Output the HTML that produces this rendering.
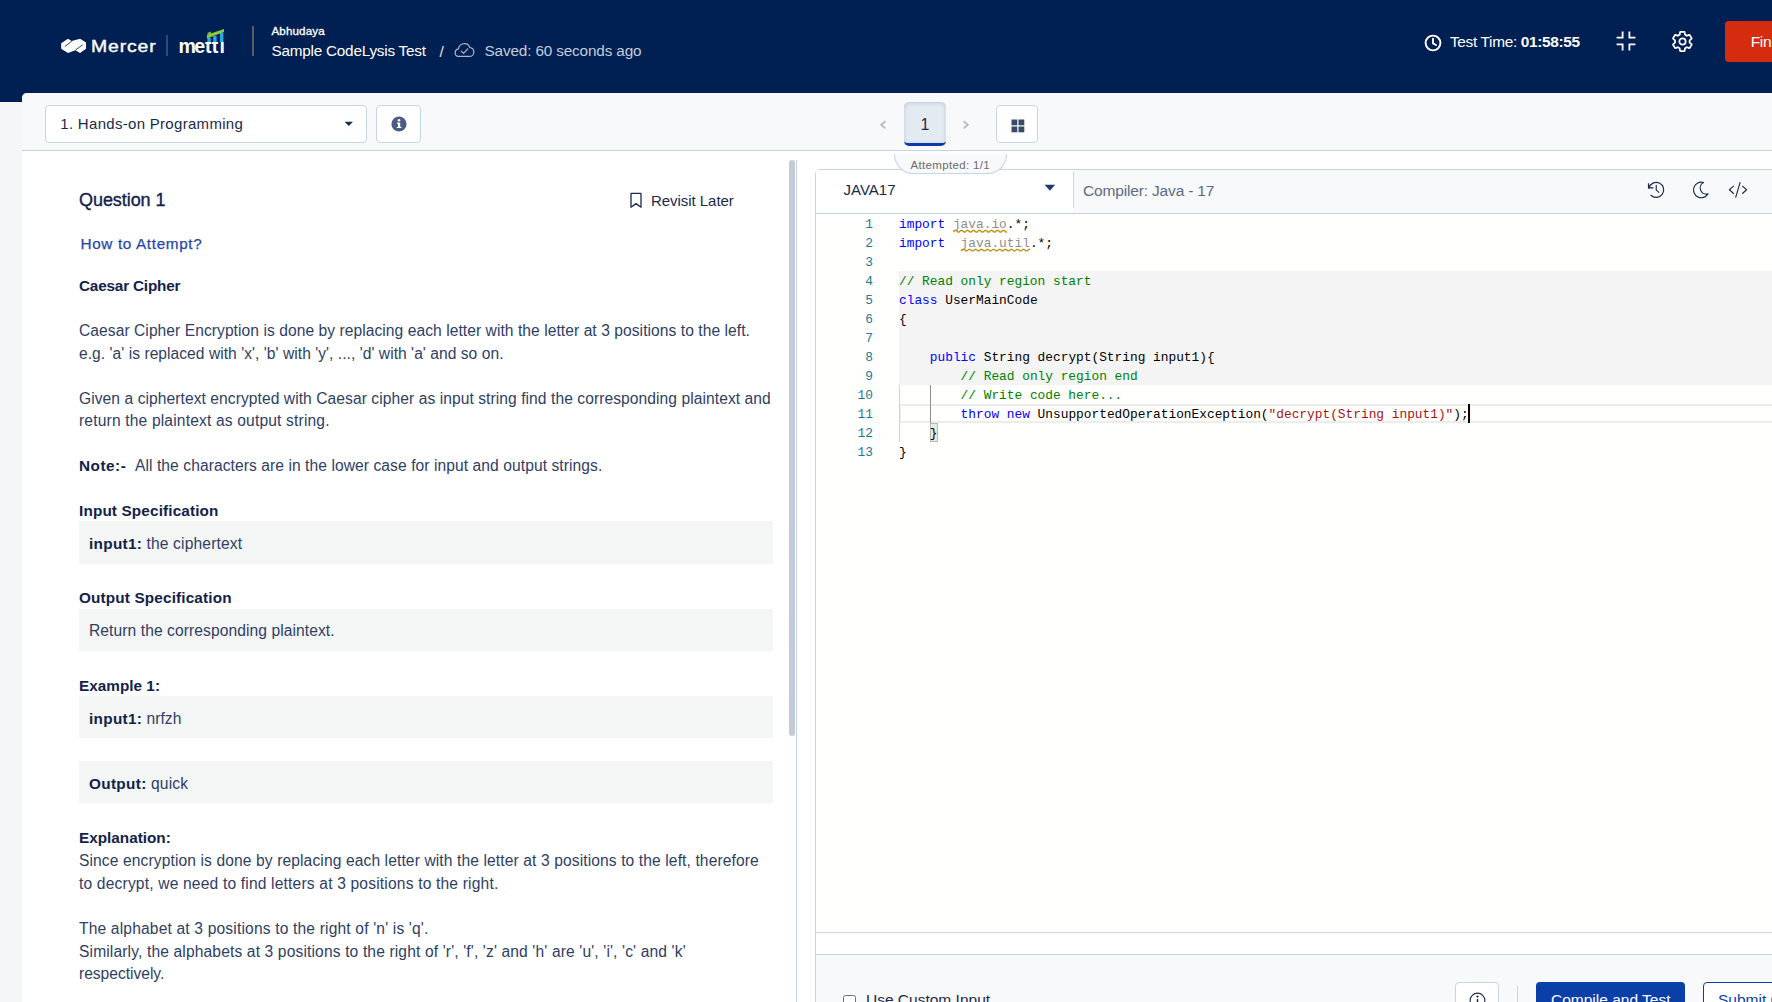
<!DOCTYPE html>
<html lang="en">
<head>
<meta charset="utf-8">
<title>Sample CodeLysis Test</title>
<style>
*{box-sizing:border-box;margin:0;padding:0}
html,body{width:1772px;height:1002px;overflow:hidden}
body{position:relative;background:#f4f6f8;font-family:"Liberation Sans",sans-serif;color:#1b2a4a;font-size:15px}
.abs{position:absolute}
.nw{white-space:nowrap}
/* header */
#hdr{left:0;top:0;width:1772px;height:102px;background:#001f52}
#hdr .t{position:absolute;color:#fff;white-space:nowrap;line-height:1}
/* main panel */
#panel{left:22px;top:93px;width:1760px;height:920px;background:#fff;border-top-left-radius:5px;overflow:hidden}
#tbar{left:0;top:0;width:1760px;height:58px;background:#f8f9fb;border-bottom:1px solid #c4d5e8}
.box{position:absolute;background:#fff;border:1px solid #c4d5e8;border-radius:4px}
/* question */
#q .l{position:absolute;margin-top:1.3px;left:79px;white-space:nowrap;line-height:22px;height:22px;color:#2f4064;font-size:15.6px}
#q .l b{font-size:15.3px}
#q b{color:#12224a}
#q .gb{position:absolute;left:79px;width:694px;background:#f4f5f5}
/* editor */
#code{font-family:"Liberation Mono",monospace;font-size:12.83px;color:#000}
#code .ln{position:absolute;left:0;height:19px;line-height:21.2px;white-space:pre}
#code .n{position:absolute;left:816px;width:57px;text-align:right;height:19px;line-height:21.2px;color:#237893;white-space:pre}
.k{color:#0000ff}.c{color:#008000}.s{color:#a31515}.g{color:#8e8e8e}
</style>
</head>
<body>
<div id="hdr" class="abs">
  <!-- Mercer mark -->
  <svg class="abs" style="left:60px;top:38px" width="27" height="16" viewBox="68.2 136.3 460 272.6">
    <path d="M88 225 L205 148 L268 186 L410 148 L512 215 L512 318 L410 392 L330 347 L205 392 L88 318 Z" fill="#fff"/>
    <path d="M270 190 L150 282 M332 342 L455 250" stroke="#001f52" stroke-width="14" fill="none"/>
  </svg>
  <div class="t" id="h_mercer" style="left:91.4px;top:38.4px;font-size:17.2px;letter-spacing:0.75px;-webkit-text-stroke:0.4px #fff;transform:scaleX(1.13);transform-origin:0 0">Mercer</div>
  <div class="abs" style="left:166px;top:35px;width:2px;height:21px;background:#34477a"></div>
  <div class="t" id="h_mettl" style="left:178.4px;top:36.7px;font-size:19.6px;font-weight:bold;letter-spacing:0px"><span style="letter-spacing:-1.7px">m</span>e<span style="letter-spacing:0.3px">t</span><span style="letter-spacing:1.1px">t</span>l</div>
  <!-- mettl bars -->
  <svg class="abs" style="left:200px;top:26px" width="30" height="16" viewBox="200 26 30 16">
    <rect x="205" y="30" width="22" height="12" fill="#001f52"/>
    <rect x="207.4" y="37.6" width="3.3" height="4.4" fill="#29abe2"/>
    <rect x="213.2" y="35.8" width="3.4" height="6.2" fill="#29abe2"/>
    <rect x="219.9" y="32.6" width="3.5" height="9.4" fill="#29abe2"/>
    <path d="M206.9 34.8 L224 29 L224 32.1 L206.9 38.4 Z M206.9 33.2 L210.8 31.6 L210.8 35 Z" fill="#8dc63f"/>
  </svg>
  <div class="abs" style="left:252px;top:26px;width:2px;height:30px;background:#585c63"></div>
  <div class="t" id="h_name" style="left:271.5px;top:25px;font-size:11.6px;-webkit-text-stroke:0.3px #fff;letter-spacing:0.135px">Abhudaya</div>
  <div class="t" id="h_test" style="left:271.5px;top:43.2px;font-size:15.3px;letter-spacing:-0.229px">Sample CodeLysis Test</div>
  <div class="t" id="h_slash" style="left:439.5px;top:43.5px;font-size:15.5px;color:#dfe4ee">/</div>
  <svg class="abs" style="left:454.3px;top:41.8px" width="21" height="16.2" viewBox="0 0 22 17" fill="none" stroke="#a9b4c9" stroke-width="1.3" stroke-linecap="round" stroke-linejoin="round">
    <path d="M5.6 15.2 C3 15.2 1.2 13.4 1.2 11.2 C1.2 9.2 2.6 7.6 4.6 7.2 C5 4.2 7.6 1.8 10.8 1.8 C13.6 1.8 15.8 3.4 16.6 5.8 C19 6 20.8 8 20.8 10.4 C20.8 13 18.8 15.2 16.2 15.2 Z"/>
    <path d="M7.6 9.6 L10 12 L14.4 7.2"/>
  </svg>
  <div class="t" id="h_saved" style="left:484.5px;top:43.2px;font-size:15.3px;color:#c3ccdc;letter-spacing:-0.142px">Saved: 60 seconds ago</div>
  <!-- right side -->
  <svg class="abs" style="left:1424.4px;top:33.6px" width="18" height="18" viewBox="0 0 18 18" fill="none" stroke="#fff" stroke-width="1.9" stroke-linecap="round" stroke-linejoin="round">
    <circle cx="9" cy="9" r="7.4"/><path d="M9 4.8 V9.4 L12 11"/>
  </svg>
  <div class="t" id="h_tt" style="left:1450px;top:34.2px;font-size:15.4px;letter-spacing:-0.327px">Test Time: <b>01:58:55</b></div>
  <svg class="abs" style="left:1615px;top:30.2px" width="22" height="22" viewBox="0 0 22 22" fill="none" stroke="#fff" stroke-width="1.8">
    <path d="M7.6 1.6 V7.6 H1.6 M14.4 1.6 V7.6 H20.4 M7.6 20.4 V14.4 H1.6 M14.4 20.4 V14.4 H20.4"/>
  </svg>
  <svg class="abs" style="left:1671px;top:29.8px" width="23" height="23" viewBox="0 0 24 24" fill="none" stroke="#fff" stroke-width="1.8" stroke-linejoin="round">
    <circle cx="12" cy="12" r="3.3"/>
    <path d="M19.4 13.2 c.05-.4.08-.8.08-1.2s-.03-.8-.08-1.2l2-1.55a.5.5 0 0 0 .12-.62l-1.9-3.3a.5.5 0 0 0-.6-.22l-2.36.95a7.3 7.3 0 0 0-2.06-1.2l-.36-2.5a.5.5 0 0 0-.5-.42h-3.8a.5.5 0 0 0-.5.42l-.36 2.5c-.75.3-1.44.7-2.06 1.2l-2.36-.95a.5.5 0 0 0-.6.22l-1.9 3.3a.5.5 0 0 0 .12.62l2 1.55c-.05.4-.08.8-.08 1.2s.03.8.08 1.2l-2 1.55a.5.5 0 0 0-.12.62l1.9 3.3c.12.22.38.3.6.22l2.36-.95c.62.5 1.3.9 2.06 1.2l.36 2.5c.04.24.25.42.5.42h3.8c.25 0 .46-.18.5-.42l.36-2.5c.75-.3 1.44-.7 2.06-1.2l2.36.95c.22.08.48 0 .6-.22l1.9-3.3a.5.5 0 0 0-.12-.62z"/>
  </svg>
  <div class="abs" style="left:1725px;top:21px;width:80px;height:41px;background:#d52b0e;border-radius:4px"></div>
  <div class="t" id="h_fin" style="left:1750.8px;top:34px;font-size:15.5px;letter-spacing:-0.4px">Finish Test</div>
</div>
<div id="panel" class="abs">
  <div id="tbar" class="abs"></div>
  <!-- toolbar items (coords relative to panel: x-22, y-93) -->
  <div class="box" style="left:23px;top:12px;width:322px;height:38px"></div>
  <div class="abs nw" id="t_sel" style="left:38.3px;top:22px;font-size:15px;line-height:18px;color:#1b2a4a;letter-spacing:0.299px">1. Hands-on Programming</div>
  <svg class="abs" style="left:322px;top:28px" width="10" height="6" viewBox="0 0 10 6"><path d="M0.6 0.8 H9 L4.8 5 Z" fill="#1b2a4a"/></svg>
  <div class="box" style="left:354px;top:12px;width:45px;height:38px"></div>
  <svg class="abs" style="left:369px;top:23px" width="16" height="16" viewBox="0 0 16 16"><circle cx="8" cy="8" r="7.6" fill="#4c5c84"/><rect x="7" y="6.6" width="2.2" height="5" fill="#fff"/><rect x="6" y="6.6" width="2" height="1.2" fill="#fff"/><rect x="5.8" y="10.8" width="4.6" height="1.2" fill="#fff"/><circle cx="8" cy="4.2" r="1.3" fill="#fff"/></svg>
  <!-- pagination -->
  <svg class="abs" style="left:857px;top:26px" width="9" height="12" viewBox="0 0 9 12" fill="none" stroke="#b4bdcb" stroke-width="1.9"><path d="M6.4 2.2 L2.2 5.8 L6.4 9.4"/></svg>
  <div class="abs" style="left:882px;top:9px;width:42px;height:44px;background:#e4eaf2;border-bottom:3px solid #0c3aa8;border-radius:5px;box-shadow:inset 0 1px 4px rgba(30,50,80,.18)"></div>
  <div class="abs nw" id="t_one" style="left:882px;top:23px;width:42px;text-align:center;font-size:16px;line-height:18px;color:#1b2a4a">1</div>
  <svg class="abs" style="left:939px;top:26px" width="9" height="12" viewBox="0 0 9 12" fill="none" stroke="#b4bdcb" stroke-width="1.9"><path d="M2.6 2.2 L6.8 5.8 L2.6 9.4"/></svg>
  <div class="box" style="left:974px;top:12px;width:42px;height:38px"></div>
  <svg class="abs" style="left:988.7px;top:25.7px" width="14" height="14" viewBox="0 0 14 14" fill="#3a4a64"><rect x="0.5" y="0.5" width="5.8" height="5.8"/><rect x="7.5" y="0.5" width="5.8" height="5.8"/><rect x="0.5" y="7.5" width="5.8" height="5.8"/><rect x="7.5" y="7.5" width="5.8" height="5.8"/></svg>
</div>
<div id="q">
<div class="abs nw" id="q_title" style="left:79px;top:188.5px;font-size:18px;line-height:22px;color:#12224a;-webkit-text-stroke:0.35px #12224a;letter-spacing:-0.066px">Question 1</div>
<svg class="abs" style="left:628.8px;top:192px" width="14" height="17" viewBox="0 0 14 17" fill="none" stroke="#1b2a4a" stroke-width="1.3" stroke-linejoin="round"><path d="M2 1.4 H12 V15.2 L7 11.6 L2 15.2 Z"/></svg>
<div class="abs nw" id="q_rev" style="left:651px;top:189.6px;font-size:15px;line-height:22px;color:#1b2a4a;letter-spacing:-0.044px">Revisit Later</div>
<div class="abs nw" id="q_how" style="left:80.5px;top:232.8px;font-size:15.3px;line-height:22px;color:#2747a6;-webkit-text-stroke:0.25px #2747a6;letter-spacing:0.644px">How to Attempt?</div>
<div class="l" id="l1" style="top:274px;letter-spacing:-0.187px"><b>Caesar Cipher</b></div>
<div class="l" id="l2" style="top:319px;letter-spacing:0.061px">Caesar Cipher Encryption is done by replacing each letter with the letter at 3 positions to the left.</div>
<div class="l" id="l3" style="top:341.5px;letter-spacing:0.042px">e.g. 'a' is replaced with 'x', 'b' with 'y', ..., 'd' with 'a' and so on.</div>
<div class="l" id="l4" style="top:386.5px;letter-spacing:0.07px">Given a ciphertext encrypted with Caesar cipher as input string find the corresponding plaintext and</div>
<div class="l" id="l5" style="top:409px;letter-spacing:0.164px">return the plaintext as output string.</div>
<div class="l" id="l6a" style="top:454px;letter-spacing:0.519px"><b>Note:-</b></div>
<div class="l" id="l6b" style="top:454px;left:135px;letter-spacing:0.076px">All the characters are in the lower case for input and output strings.</div>
<div class="l" id="l7" style="top:499px;letter-spacing:0.146px"><b>Input Specification</b></div>
<div class="gb" style="top:521px;height:42.6px"></div>
<div class="l" id="l8a" style="top:531.5px;left:89px;letter-spacing:0.317px"><b>input1:</b></div>
<div class="l" id="l8b" style="top:531.5px;left:146.4px;letter-spacing:0.163px">the ciphertext</div>
<div class="l" id="l9" style="top:586px;letter-spacing:0.156px"><b>Output Specification</b></div>
<div class="gb" style="top:609px;height:42px"></div>
<div class="l" id="l10" style="top:619px;left:89px;letter-spacing:0.085px">Return the corresponding plaintext.</div>
<div class="l" id="l11" style="top:674px;letter-spacing:0.022px"><b>Example 1:</b></div>
<div class="gb" style="top:696.3px;height:42.2px"></div>
<div class="l" id="l12a" style="top:706.5px;left:89px;letter-spacing:0.317px"><b>input1:</b></div>
<div class="l" id="l12b" style="top:706.5px;left:146.4px;letter-spacing:0.086px">nrfzh</div>
<div class="gb" style="top:761px;height:42.4px"></div>
<div class="l" id="l13a" style="top:771.5px;left:89px;letter-spacing:0.34px"><b>Output:</b></div>
<div class="l" id="l13b" style="top:771.5px;left:150.9px;letter-spacing:0.199px">quick</div>
<div class="l" id="l14" style="top:826px;letter-spacing:0.0px"><b>Explanation:</b></div>
<div class="l" id="l15" style="top:849px;letter-spacing:0.112px">Since encryption is done by replacing each letter with the letter at 3 positions to the left, therefore</div>
<div class="l" id="l16" style="top:871.5px;letter-spacing:0.174px">to decrypt, we need to find letters at 3 positions to the right.</div>
<div class="l" id="l17" style="top:917px;letter-spacing:0.164px">The alphabet at 3 positions to the right of 'n' is 'q'.</div>
<div class="l" id="l18" style="top:939.5px;letter-spacing:0.138px">Similarly, the alphabets at 3 positions to the right of 'r', 'f', 'z' and 'h' are 'u', 'i', 'c' and 'k'</div>
<div class="l" id="l19" style="top:962px;letter-spacing:-0.017px">respectively.</div>
<div class="abs" style="left:789px;top:160px;width:6px;height:576px;background:#c3cbd6;border-radius:3px"></div>
<div class="abs" style="left:796px;top:160px;width:1px;height:850px;background:#c4d5e8"></div>
</div>
<div id="ed">
<div class="abs" style="left:815px;top:169px;width:970px;height:850px;border:1px solid #c4d5e8;border-radius:5px 0 0 0;background:#fffffe"></div>
<div class="abs" style="left:816px;top:170px;width:960px;height:43px;background:#f8f9fb"></div>
<div class="abs" style="left:816px;top:170px;width:257px;height:43px;background:#fff;border-radius:4px 0 0 4px"></div>
<div class="abs" style="left:816px;top:213px;width:960px;height:1px;background:#c4d5e8"></div>
<div class="abs" style="left:1073px;top:172px;width:1px;height:36px;background:#c4d5e8"></div>
<div class="abs nw" id="e_lang" style="left:843.5px;top:180.8px;font-size:15px;line-height:18px;color:#1b2a4a">JAVA17</div>
<svg class="abs" style="left:1044px;top:184px" width="12" height="8" viewBox="0 0 12 8"><path d="M0.6 0.8 H11.2 L5.9 6.8 Z" fill="#1f3a6e"/></svg>
<div class="abs nw" id="e_comp" style="left:1083px;top:182px;font-size:15.5px;line-height:18px;color:#5c6b85;letter-spacing:-0.163px">Compiler: Java - 17</div>
<svg class="abs" style="left:1646px;top:180px" width="20" height="20" viewBox="0 0 20 20" fill="none" stroke="#1b2a4a" stroke-width="1.15" stroke-linecap="round" stroke-linejoin="round"><path d="M2.94 8 A7.5 7.5 0 1 1 4.94 15.25"/><path d="M2.5 3.2 V7.9 H7.5" stroke-linecap="butt" stroke-linejoin="miter"/><path d="M10.25 5.2 V9.9 L12.8 12.3"/></svg>
<svg class="abs" style="left:1692px;top:180px" width="18" height="20" viewBox="0 0 18 20" fill="none" stroke="#1b2a4a" stroke-width="1.15" stroke-linecap="round" stroke-linejoin="round"><path d="M11.5 2.53 A7.75 7.75 0 1 0 15.95 13.85 A6.12 6.12 0 0 1 11.5 2.53 Z"/></svg>
<svg class="abs" style="left:1727px;top:181px" width="22" height="18" viewBox="0 0 22 18" fill="none" stroke="#1b2a4a" stroke-width="1.15" stroke-linecap="butt" stroke-linejoin="miter"><path d="M6.8 4.9 L2.4 8.7 L6.8 12.7 M15.2 4.9 L19.6 8.7 L15.2 12.7 M13.2 1.2 L8.6 16.7"/></svg>
<div id="code">
<div class="abs" style="left:899px;top:271px;width:900px;height:114px;background:#f4f4f4"></div>
<div class="abs" style="left:899px;top:404px;width:900px;height:19px;border:2px solid #ededed"></div>
<div class="abs" style="left:899px;top:385px;width:1px;height:57px;background:#d3d3d3"></div>
<div class="abs" style="left:930px;top:385px;width:1px;height:38px;background:#8e8e8e"></div>
<div class="abs" style="left:930px;top:423px;width:8px;height:19px;background:#e6ebe2;border:1px solid #b9b9b9"></div>
<div class="n" style="top:214px">1</div><div class="ln" style="top:214px;left:899px"><span class="k">import</span> <span class="g sq">java.io</span>.*;</div>
<div class="n" style="top:233px">2</div><div class="ln" style="top:233px;left:899px"><span class="k">import</span>  <span class="g sq">java.util</span>.*;</div>
<div class="n" style="top:252px">3</div><div class="ln" style="top:252px;left:899px"></div>
<div class="n" style="top:271px">4</div><div class="ln" style="top:271px;left:899px"><span class="c">// Read only region start</span></div>
<div class="n" style="top:290px">5</div><div class="ln" style="top:290px;left:899px"><span class="k">class</span> UserMainCode</div>
<div class="n" style="top:309px">6</div><div class="ln" style="top:309px;left:899px">{</div>
<div class="n" style="top:328px">7</div><div class="ln" style="top:328px;left:899px"></div>
<div class="n" style="top:347px">8</div><div class="ln" style="top:347px;left:899px">    <span class="k">public</span> String decrypt(String input1){</div>
<div class="n" style="top:366px">9</div><div class="ln" style="top:366px;left:899px">        <span class="c">// Read only region end</span></div>
<div class="n" style="top:385px">10</div><div class="ln" style="top:385px;left:899px">        <span class="c">// Write code here...</span></div>
<div class="n" style="top:404px">11</div><div class="ln" style="top:404px;left:899px">        <span class="k">throw</span> <span class="k">new</span> UnsupportedOperationException(<span class="s">"decrypt(String input1)"</span>);</div>
<div class="n" style="top:423px">12</div><div class="ln" style="top:423px;left:899px">    }</div>
<div class="n" style="top:442px">13</div><div class="ln" style="top:442px;left:899px">}</div>
<svg class="abs" style="left:953px;top:228.9px" width="54" height="4" viewBox="0 0 54 4" fill="none" stroke="#bf8803" stroke-width="1.25"><path d="M0 3 l2 -1.7 l1 0 l2 1.7 l1 0 l2 -1.7 l1 0 l2 1.7 l1 0 l2 -1.7 l1 0 l2 1.7 l1 0 l2 -1.7 l1 0 l2 1.7 l1 0 l2 -1.7 l1 0 l2 1.7 l1 0 l2 -1.7 l1 0 l2 1.7 l1 0 l2 -1.7 l1 0 l2 1.7 l1 0 l2 -1.7 l1 0 l2 1.7 l1 0 l2 -1.7 l1 0 l2 1.7 l1 0"/></svg>
<svg class="abs" style="left:960.6px;top:247.9px" width="69.4" height="4" viewBox="0 0 69.4 4" fill="none" stroke="#bf8803" stroke-width="1.25"><path d="M0 3 l2 -1.7 l1 0 l2 1.7 l1 0 l2 -1.7 l1 0 l2 1.7 l1 0 l2 -1.7 l1 0 l2 1.7 l1 0 l2 -1.7 l1 0 l2 1.7 l1 0 l2 -1.7 l1 0 l2 1.7 l1 0 l2 -1.7 l1 0 l2 1.7 l1 0 l2 -1.7 l1 0 l2 1.7 l1 0 l2 -1.7 l1 0 l2 1.7 l1 0 l2 -1.7 l1 0 l2 1.7 l1 0 l2 -1.7 l1 0 l2 1.7 l1 0 l2 -1.7 l1 0 l2 1.7 l1 0 l2 -1.7 l1 0 l2 1.7 l1 0"/></svg>
<div class="abs" style="left:1468px;top:404px;width:2px;height:19px;background:#000"></div>
</div>
<div class="abs" style="left:816px;top:932px;width:960px;height:1px;background:#c4d5e8"></div>
<div class="abs" style="left:816px;top:933px;width:960px;height:21px;background:#fff"></div>
<div class="abs" style="left:816px;top:954px;width:960px;height:1px;background:#c4d5e8"></div>
<div class="abs" style="left:816px;top:955px;width:960px;height:60px;background:#f8f9fb"></div>
<div class="abs" style="left:843px;top:995px;width:13px;height:13px;border:1px solid #6b6f76;border-radius:2.5px;background:#fff"></div>
<div class="abs nw" id="e_uci" style="left:866px;top:990.2px;font-size:15.5px;line-height:20px;color:#1b2a4a">Use Custom Input</div>
<div class="box" style="left:1455px;top:982px;width:44px;height:40px;background:#fff"></div>
<svg class="abs" style="left:1468.5px;top:992px" width="17" height="17" viewBox="0 0 18 18" fill="none" stroke="#1b2a4a" stroke-width="1.2"><circle cx="9" cy="9" r="7.8"/><path d="M9 7.4 V13" stroke-width="1.6"/><circle cx="9" cy="4.8" r="0.6" fill="#1b2a4a"/></svg>
<div class="abs" style="left:1517px;top:986px;width:1px;height:30px;background:#c4d5e8"></div>
<div class="abs" style="left:1536px;top:982px;width:149px;height:40px;background:#0a3ea8;border-radius:4px"></div>
<div class="abs nw" id="e_cat" style="left:1551px;top:990px;font-size:15.5px;line-height:20px;color:#fff">Compile and Test</div>
<div class="abs" style="left:1703px;top:982px;width:120px;height:40px;background:#fff;border:1px solid #0a3ea8;border-radius:4px"></div>
<div class="abs nw" id="e_sub" style="left:1718px;top:990px;font-size:15.5px;line-height:20px;color:#0a3ea8">Submit Code</div>
<div class="abs" style="left:894px;top:154.3px;width:112.5px;height:19.3px;border:1px solid #c4d5e8;border-top:none;border-radius:0 0 19px 19px / 0 0 20px 20px;background:#f8f9fb"></div>
<div class="abs nw" id="e_att" style="left:910.4px;top:157.8px;font-size:11.5px;line-height:14px;color:#6b6b6b;letter-spacing:0.343px">Attempted: 1/1</div>
</div>
</body>
</html>
